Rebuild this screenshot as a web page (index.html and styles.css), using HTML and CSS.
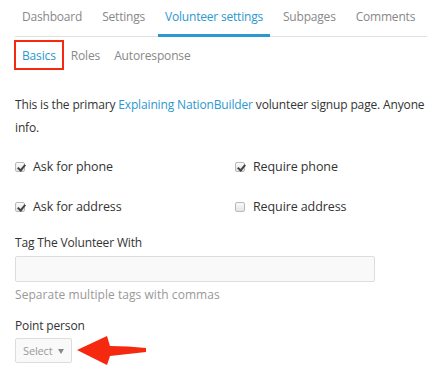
FILE: index.html
```html
<!DOCTYPE html>
<html lang="en">
<head>
    <meta charset="UTF-8">
    <meta name="viewport" content="width=device-width, initial-scale=1.0">
    <title>Volunteer settings - Basics</title>
    <link rel="stylesheet" href="styles.css">
</head>
<body>
    <nav class="tabs">
        <a href="#" class="tab">Dashboard</a>
        <a href="#" class="tab">Settings</a>
        <a href="#" class="tab active">Volunteer settings</a>
        <a href="#" class="tab">Subpages</a>
        <a href="#" class="tab">Comments</a>
    </nav>
    <nav class="subtabs">
        <a href="#" class="subtab active">Basics</a>
        <a href="#" class="subtab">Roles</a>
        <a href="#" class="subtab">Autoresponse</a>
    </nav>

    <main class="content">
        <p class="intro">This is the primary <a href="#">Explaining NationBuilder</a> volunteer signup page. Anyone<br>info.</p>

        <div class="checks">
            <label class="check"><span class="box checked"></span>Ask for phone</label>
            <label class="check"><span class="box checked"></span>Require phone</label>
            <label class="check"><span class="box checked"></span>Ask for address</label>
            <label class="check"><span class="box"></span>Require address</label>
        </div>

        <div class="field">
            <label for="tags">Tag The Volunteer With</label>
            <input type="text" id="tags" class="text-input">
            <p class="help">Separate multiple tags with commas</p>
        </div>

        <div class="field field-person">
            <label>Point person</label>
            <div class="select-row">
                <div class="select">Select <span class="caret"></span></div>
                <!-- annotation arrow -->
                <svg class="pointer" width="72" height="32" viewBox="0 0 72 32">
                    <path d="M1,15 L31,1 L34,11 Q52,11 70,13 L70,17 Q52,19 34,21 L31,30 Z" fill="#f5290f"/>
                </svg>
            </div>
        </div>
    </main>
</body>
</html>
```

FILE: styles.css
```css
/* Basic reset */
* {
    margin: 0;
    padding: 0;
    box-sizing: border-box;
}

body {
    font-family: 'Open Sans', 'Noto Sans', sans-serif;
    font-size: 12px;
    letter-spacing: -0.15px;
    color: #333;
    background-color: #fff;
    overflow: hidden;
}

a {
    text-decoration: none;
}

/* Main tabs */
.tabs {
    display: flex;
    gap: 6px;
    margin-left: 15px;
    height: 37px;
    border-bottom: 1px solid #e2e2e2;
    white-space: nowrap;
}

.tabs .tab {
    padding: 8px 7px 0;
    color: #888;
    height: 37px;
    letter-spacing: -0.2px;
}

.tabs .tab.active {
    color: #2b98cf;
    border-bottom: 3px solid #2b98cf;
}

/* Sub tabs */
.subtabs {
    display: flex;
    margin: 3px 0 0 15px;
    height: 30px;
    align-items: center;
}

.subtabs .subtab {
    padding: 2px 7px 0;
    color: #888;
    line-height: 24px;
}

.subtabs .subtab.active {
    color: #2b98cf;
    margin-left: -1px;
    border: 2px solid #f5290f;
    padding: 2px 6px 0;
}

/* Content */
.content {
    padding: 0 15px;
}

.intro {
    margin-top: 23px;
    line-height: 23px;
    white-space: nowrap;
}

.intro a {
    color: #2b98cf;
}

.checks {
    display: grid;
    grid-template-columns: 220px 1fr;
    row-gap: 22px;
    margin-top: 19px;
}

.check {
    display: flex;
    align-items: center;
    font-size: 12.5px;
    letter-spacing: -0.1px;
    line-height: 18px;
}

.check .box {
    width: 10px;
    height: 10px;
    margin-right: 8px;
    border: 1px solid #b8b8b8;
    border-radius: 2px;
    background: linear-gradient(#fafafa, #e4e4e4);
    position: relative;
}

.check .box.checked::after {
    content: "";
    position: absolute;
    left: 3px;
    top: 0;
    width: 3px;
    height: 6px;
    border: solid #444;
    border-width: 0 2px 2px 0;
    transform: rotate(40deg);
}

/* Form fields */
.field {
    margin-top: 18px;
}

.field label {
    display: block;
    line-height: 18px;
    margin-bottom: 4px;
}

.text-input {
    display: block;
    width: 360px;
    height: 26px;
    border: 1px solid #ddd;
    background-color: #f9f9f9;
    border-radius: 2px;
}

.help {
    color: #999;
    letter-spacing: 0.05px;
    margin-top: 4px;
    line-height: 17px;
}

.field-person {
    margin-top: 14px;
}

.field-person label {
    margin-bottom: 3px;
}

.select-row {
    display: flex;
    align-items: flex-start;
}

.select {
    width: 57px;
    height: 25px;
    border: 1px solid #ddd;
    background-color: #f9f9f9;
    border-radius: 2px;
    color: #999;
    font-size: 11px;
    padding-left: 7px;
    line-height: 23px;
    position: relative;
}

.select .caret {
    position: absolute;
    right: 7px;
    top: 10px;
    border-left: 3px solid transparent;
    border-right: 3px solid transparent;
    border-top: 5px solid #888;
}

.pointer {
    margin: -3px 0 0 4px;
}
```
